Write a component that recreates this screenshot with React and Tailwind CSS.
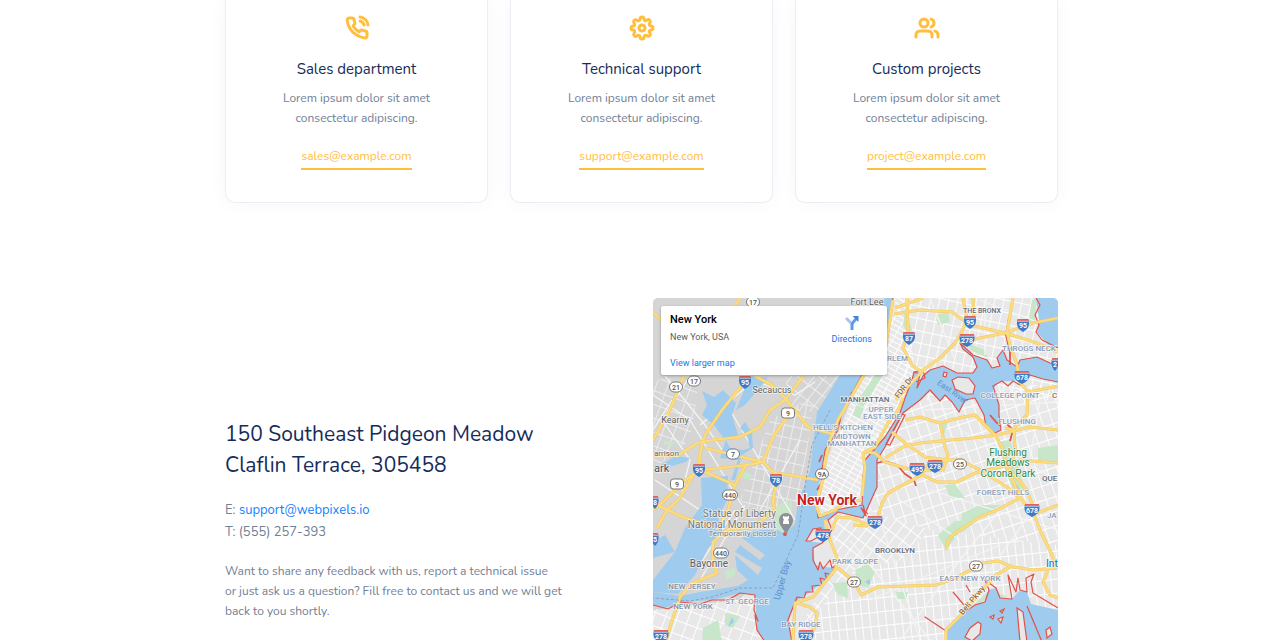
import { FiPhoneCall, FiSettings, FiUsers } from "react-icons/fi";

const departments = [
  { title: "Sales department", email: "sales@example.com", Icon: FiPhoneCall },
  { title: "Technical support", email: "support@example.com", Icon: FiSettings },
  { title: "Custom projects", email: "project@example.com", Icon: FiUsers },
];

const highways = [
  "M653 440L670 410L676 395L690 360L700 330",
  "M653 455L677 456L697 443L713 440L740 437L760 427L770 410L785 400L802 378L812 360",
  "M653 510L663 502L683 482L699 470L700 453L705 435L722 410L738 390L750 375",
  "M705 448L763 462L774 473L776 482L773 503L775 510L753 527L727 530L713 542L713 563L717 573L693 583L680 597L670 627L666 642",
  "M703 470L747 465L763 462L773 437L787 417",
  "M705 472L735 485L747 463M735 485L728 510L717 530",
  "M657 505L683 517L713 527M693 475L680 498L667 510L657 528",
  "M775 473L790 475L818 480M653 312L661 320",
  "M755 376L770 384L785 398L808 427L832 434",
  "M893 300L886 345L862 378L838 420L830 440L825 462L823 480L816 505L820 516L835 510L845 502L862 500",
  "M903 398L898 410L888 423L875 447L863 453L865 467L862 496",
  "M865 452L875 453L885 462L912 470L948 460L960 460L980 470L1007 487L1020 498",
  "M892 432L905 443L925 457L948 460M885 458L905 446L920 443L973 438L997 435L1030 427L1058 430",
  "M832 530L837 517L852 518L868 525L878 517L882 503L888 493L918 477L925 470L943 470L948 455L945 447L940 423",
  "M912 470L937 482L957 482L975 473L1000 467L1020 460L1058 463",
  "M905 420L920 417L940 423L963 417L975 415L987 427L995 435L1002 447L1008 470L1020 497L1035 517L1040 530L1051 553L1057 568",
  "M1005 428L1014 430L1015 450L1010 470L1027 490L1035 512M1037 513L1058 505",
  "M946 550L948 540L956 532L960 530L980 517L997 510L1020 498",
  "M894 314L920 310L952 312L970 325L1005 333L1037 343L1058 352",
  "M963 298L967 320L960 335L955 343L940 358L923 370L905 390L896 400",
  "M960 342L1005 333L1033 323L1058 318M973 298L974 328",
  "M1013 298L1007 332L1010 345L1017 365L1020 382L1028 392L1027 415L1014 428M1028 392L1058 386",
  "M907 298L908 332L903 348L912 365L923 373M895 308L923 298",
  "M825 520L830 540L838 560L835 570L813 597L795 603L793 642M797 603L810 607L817 613L815 627L806 640",
  "M838 568L855 582L861 595L878 587L936 585L956 578L983 563L998 561L1013 567L1033 570L1058 568",
  "M946 642L946 630L963 613L976 597L996 575L1010 567M1048 570L1043 582L1050 595L1058 598",
  "M853 525L868 526M740 298L735 306",
];

const interstates = [
  ["95", 745, 382], ["95", 970, 322], ["95", 1023, 325], ["87", 909, 338], ["278", 967, 340],
  ["678", 1022, 377], ["95", 699, 470], ["78", 776, 480], ["495", 917, 469], ["278", 935, 466],
  ["278", 875, 522], ["478", 823, 535], ["678", 1032, 510], ["278", 661, 636], ["278", 806, 636],
  ["8", 655, 502], ["5", 655, 539], ["2", 1055, 364],
];

const routes = [
  ["17", 753, 302], ["21", 676, 387], ["17", 694, 381], ["9", 788, 413], ["7", 733, 454],
  ["440", 730, 495], ["9", 677, 484], ["9A", 822, 474], ["25", 960, 464], ["440", 721, 553],
  ["27", 854, 582], ["27", 976, 566],
];

const areaLabels = [
  ["THE BRONX", 982, 313, 7, "#5f6b7c"], ["THROGS NECK", 1029, 351, 8, "#8c9ab5"],
  ["HARLEM", 892, 361, 8, "#8c9ab5"], ["MANHATTAN", 865, 402, 8, "#5f6b7c"],
  ["UPPER", 881, 412, 8, "#8c9ab5"], ["EAST SIDE", 882, 419, 8, "#8c9ab5"],
  ["COLLEGE POINT", 1010, 398, 8, "#8c9ab5"], ["FLUSHING", 1017, 424, 8, "#8c9ab5"],
  ["HELL'S KITCHEN", 843, 430, 8, "#8c9ab5"], ["MIDTOWN", 852, 439, 8, "#8c9ab5"],
  ["MANHATTAN", 852, 446, 8, "#8c9ab5"], ["FOREST HILLS", 1003, 495, 8, "#8c9ab5"],
  ["BROOKLYN", 895, 553, 8, "#5f6b7c"], ["PARK SLOPE", 855, 564, 8, "#8c9ab5"],
  ["EAST NEW YORK", 970, 581, 8, "#8c9ab5"], ["NEW JERSEY", 692, 589, 8, "#87909e"],
  ["NEW YORK", 693, 609, 8, "#87909e"], ["ST. GEORGE", 747, 604, 8, "#8c9ab5"],
  ["BAY RIDGE", 801, 627, 8, "#8c9ab5"],
];

const placeLabels = [
  ["Fort Lee", 867, 305, 9, "#5c5c5c"], ["Secaucus", 772, 393, 9, "#5c5c5c"],
  ["Kearny", 675, 423, 9, "#5c5c5c"], ["Bayonne", 709, 567, 10, "#5c5c5c"],
  ["Flushing", 1008, 456, 10, "#2f8a4c"], ["Meadows", 1008, 466, 10, "#2f8a4c"],
  ["Corona Park", 1008, 477, 10, "#2f8a4c"],
];

function StreetPattern({ id, width, height, angle }) {
  return (
    <pattern id={id} width={width} height={height} patternUnits="userSpaceOnUse" patternTransform={`rotate(${angle})`}>
      <path d={`M0 0H${width}M0 0V${height}`} stroke="#fff" strokeWidth="1.8" fill="none" />
    </pattern>
  );
}

function Interstate({ label, x, y }) {
  const w = label.length > 2 ? 7 : label.length > 1 ? 5.5 : 3;
  return (
    <g transform={`translate(${x} ${y})`}>
      <path d={`M${-w} -5.5H${w}C${w + 1.5} 0 ${w} 4 0 7C${-w} 4 ${-w - 1.5} 0 ${-w} -5.5Z`} fill="#3d7ac8" />
      <path d={`M${-w} -6H${w}V-4H${-w}Z`} fill="#e0625c" />
      <path d={`M${-w} -3.7H${w}`} stroke="#fff" strokeWidth="0.6" />
      <text y="3" fontSize="7" fontWeight="700" fill="#fff" textAnchor="middle">{label}</text>
    </g>
  );
}

function RouteMarker({ label, x, y }) {
  const w = label.length > 2 ? 15 : 13;
  return (
    <g transform={`translate(${x} ${y})`}>
      <rect x={-w / 2} y="-5" width={w} height="10" rx={label === "9" ? 3 : 5} fill="#fff" stroke="#6b6b6b" strokeWidth="0.9" />
      <text y="3" fontSize="7" fontWeight="500" fill="#555" textAnchor="middle">{label}</text>
    </g>
  );
}

function CityMap() {
  return (
    <svg viewBox="653 298 405 444" preserveAspectRatio="xMidYMin slice" className="block h-full w-full font-[Roboto,sans-serif]" role="img" aria-label="Map of New York">
      <defs>
        <StreetPattern id="manhattan" width={9} height={5} angle={29} />
        <StreetPattern id="bronx" width={9} height={12} angle={12} />
        <StreetPattern id="queens" width={10} height={14} angle={-18} />
        <StreetPattern id="brooklyn" width={9} height={13} angle={38} />
        <StreetPattern id="flatbush" width={8} height={14} angle={-6} />
        <StreetPattern id="island" width={11} height={13} angle={20} />
      </defs>

      <rect x="653" y="298" width="405" height="444" fill="#e8e8e8" />
      <path d="M653 298H888L862 375L818 480L795 530L740 600L653 610Z" fill="#d5d5d5" />

      <path d="M905 298H1058V400H960L920 400L905 385Z" fill="url(#bronx)" />
      <path d="M893 298H905L915 372L898 412L862 507L820 518L823 475L862 375Z" fill="url(#manhattan)" />
      <path d="M870 440L925 385H1058V545L930 530L868 510Z" fill="url(#queens)" />
      <path d="M832 515L868 510L930 530L900 560L855 570L790 640L835 570Z" fill="url(#brooklyn)" />
      <path d="M855 570L900 560L930 530L1058 545V640H850L790 642Z" fill="url(#flatbush)" />
      <path d="M653 610L755 595L770 642H653Z" fill="url(#island)" />
      <g opacity="0.6">
        <path d="M653 380L700 376L690 440L653 470Z" fill="url(#island)" />
        <path d="M770 420L815 395L800 500L765 520L740 500Z" fill="url(#bronx)" />
        <path d="M785 376H842L818 412L790 410Z" fill="url(#brooklyn)" />
      </g>

      <g fill="#c8e6c9">
        <path d="M881 366L887 369L863 407L856 403Z" />
        <path d="M856 405L864 409L860 419L853 415Z" />
        <path d="M936 315L948 312L950 322L938 325Z" />
        <path d="M968 343L985 350L988 358L970 350Z" />
        <path d="M1032 300L1037 298L1035 322L1028 325Z" />
        <path d="M905 310L912 330L908 335L903 325Z" />
        <path d="M998 442L1010 440L1018 465L1025 490L1015 495L1005 470Z" />
        <path d="M1038 448L1058 445V462L1038 460Z" />
        <path d="M945 485L955 484L965 498L950 498Z" />
        <path d="M962 513L980 505L1000 505L978 520L960 534Z" />
        <path d="M938 535L955 521L975 520L960 532L946 550Z" />
        <path d="M940 425L948 422L944 435Z" />
        <path d="M855 570L868 564L875 572L868 588L858 585Z" />
        <path d="M896 592L908 592L906 599L897 599Z" />
        <path d="M832 583L847 582L848 598L838 595Z" />
        <path d="M958 612L972 606L990 590L1008 597L985 600L976 606L968 610Z" />
        <path d="M740 470L753 475L750 480L740 478Z" />
        <path d="M777 505L792 500V530L775 535Z" />
        <path d="M725 570L735 568V575L726 579Z" />
        <path d="M703 628L718 620L722 642H702Z" />
        <path d="M725 613L740 616L733 628L725 625Z" />
        <path d="M850 378L830 405L827 402L844 378Z" />
        <path d="M664 441L676 442L672 446L664 445Z" />
      </g>

      <g stroke="#f4f4f4" strokeWidth="1.3" fill="none">
        <path d="M653 395L690 420L745 510M665 376L705 425L722 450M653 430L672 400M690 376L662 420L690 460L680 500M700 425L760 376M730 410L795 520M740 376L795 395L815 382M760 510L800 440M655 480L700 510M745 505L700 580M735 510L693 575M725 520L690 560" />
        <path d="M925 410L1058 402M960 430L1058 480M930 490L1058 530M1000 510L960 560M900 500L960 540M850 540L930 640M880 520L920 640M1040 400L1030 460M870 600L1000 545M900 640L960 560M1058 330L980 300M985 300L985 355M930 298L955 360M1040 500L990 570" />
      </g>

      <g fill="#9fcbee">
        <path d="M885 298H893L888 335L862 375L842 412L838 430L825 450L822 470L816 500L818 518L826 515L835 510L862 505L863 477L865 460L885 437L900 413L905 398L912 380L914 372L920 372L917 388L923 376L930 370L943 366L957 373L973 373L977 367L973 357L963 349L960 343L973 355L987 360L992 368L1000 366L997 358L1003 350L1007 360L1017 367L1020 360L1037 357L1050 363L1058 366V382L1043 379L1030 375L1020 380L1010 381L998 382L993 390L999 405L999 415L1001 430L995 433L986 427L984 415L975 398L965 400L959 412L952 402L945 395L940 401L930 390L920 400L903 413L885 447L877 460L877 487L868 507L863 518L838 512L828 520L824 523L825 530L810 537L808 541L822 543L813 548L815 565L832 568L835 572L813 590L795 602L788 620L792 642H765L757 630L755 595L740 593L712 600L680 602L665 608L653 605V592L680 596L700 592L738 586L748 580L737 570L735 555L758 575L762 568L735 552L740 545L760 560L765 555L742 538L755 530L778 530L785 534L795 524L798 500L805 485L810 470L817 412L840 375Z" />
        <path d="M1036 298H1058V348L1048 345L1037 332L1039 320Z" />
        <path d="M701 478L728 476L727 500L718 518L723 532L708 548L695 575L678 594L653 592V580L675 552L685 528L702 505Z" />
        <path d="M653 542L665 535L675 552L653 558Z" />
        <path d="M702 391L714 397L723 390L736 403L732 415L738 435L725 440L714 425L702 415L707 405Z" />
        <path d="M946 642V631L963 613L975 605L985 602L989 590L996 588L1000 598L1012 599L1020 590L1027 592L1031 604L1058 610V642Z" />
        <path d="M1017 484L1020 492L1015 488ZM865 582L870 579L870 585ZM728 627L732 617L734 622Z" />
      </g>
      <path d="M726 440L730 448L743 450L750 448L747 435L740 428L745 422L752 433L753 448L742 455L735 480L731 480L738 460L720 458ZM653 470L675 456L690 458L686 462L665 468ZM750 376L768 378L745 405L736 410Z" fill="#9fcbee" />

      <g fill="#e8e8e8" stroke="#e0524c" strokeWidth="1.2">
        <path d="M952 380L958 377L969 378L975 386L973 394L966 394L955 389Z" />
        <path d="M944 372L947 373L946 377L943 376Z" />
        <path d="M965 637L970 628L978 622L981 624L980 634L972 641Z" />
        <path d="M990 617L994 615L993 619ZM1000 611L1004 609L1002 613ZM998 619L1003 617L1001 623ZM1046 630L1050 627L1052 634L1047 638Z" />
        <path d="M1017 608L1023 612L1027 642H1020Z" />
        <path d="M806 541L813 529L821 528L822 535L811 541Z" />
        <path d="M886 444L902 414L905 415L890 445Z" />
      </g>
      <circle cx="785" cy="534" r="2" fill="#e0524c" />

      <g fill="none" stroke="#e0524c" strokeWidth="1.2" strokeLinejoin="round">
        <path d="M893 298L888 335L862 375L842 412L838 430L825 450L822 470L821 490L816 500L818 518L826 515L835 510L862 505L863 477L865 460L885 437L900 413L905 398L912 380L914 372L920 374L917 388L923 376L930 370L943 366L957 373L973 373L977 367L973 357L963 349L960 343L973 355L987 360L992 368L1000 366L997 358L1003 350L1007 360L1017 367L1020 360L1037 357L1050 363L1058 366" />
        <path d="M1058 382L1043 379L1030 375L1020 385L1013 381L1008 386L1002 381L993 386L999 405L999 415L1001 430L995 433L986 427L984 415L975 398L965 400L959 412L952 402L945 395L940 401L930 390L920 400L903 413L885 447L877 460L877 487L868 507L863 518L838 512L828 520L832 530L825 540L822 543L813 548L813 560L818 570L820 562L823 569L830 560L832 568L835 566L832 575L825 573L827 580L820 578L822 585L812 586L813 592L806 592L804 598L797 597L795 602L788 620L792 642" />
        <path d="M765 642L757 630L755 615L758 621L754 610L755 595L740 593L728 600L712 600L700 604L680 602L668 609L653 605" />
        <path d="M1036 298L1040 305L1035 315L1039 325L1036 332L1042 340L1048 343L1058 348" />
        <path d="M946 642V631L925 617L946 631L963 613L975 605L985 602L989 590L985 580L996 588L1000 598L1012 599L1008 575L1016 592L1018 578L1020 590L1027 592L1026 578L1034 574L1031 582L1033 593L1058 608M953 592L964 605M966 585L970 592M1027 606L1042 642" />
        <path d="M877 463L885 461L897 465L905 474L914 480L916 486M1007 424L1013 430L1010 441M1009 318L1006 335L1010 352L1010 365M822 455L819 462M822 468L818 475M821 484L817 490M838 422L833 429M852 392L850 400M990 415L996 422L1001 426" strokeWidth="1.8" />
        <path d="M914 372L923 370L925 378L916 382M863 505L866 516L861 508L868 514" />
      </g>

      <g fill="none" strokeLinejoin="round">
        {highways.map((d) => <path key={d} d={d} stroke="#f1c862" strokeWidth="3.2" />)}
        {highways.map((d) => <path key={d} d={d} stroke="#fbdc80" strokeWidth="2.2" />)}
      </g>
      <path d="M830 410L812 445L806 480L798 535L773 588L740 588L712 597L690 601L653 598" fill="none" stroke="#8597a8" strokeWidth="0.8" strokeDasharray="3 2" />

      <g stroke="#fff" strokeWidth="1.5" strokeOpacity="0.7" paintOrder="stroke" textAnchor="middle">
        {areaLabels.map(([label, x, y, size, fill]) => (
          <text key={label + y} x={x} y={y} fontSize={size} fill={fill} fontWeight="500">{label}</text>
        ))}
        {placeLabels.map(([label, x, y, size, fill]) => (
          <text key={label} x={x} y={y} fontSize={size} fill={fill}>{label}</text>
        ))}
        <g fontSize="10" fill="#777" textAnchor="end">
          <text x="776" y="517">Statue of Liberty</text>
          <text x="776" y="528">National Monument</text>
          <text x="776" y="536" fontSize="8">Temporarily closed</text>
        </g>
        <g textAnchor="start">
          <text x="654" y="456" fontSize="8" fill="#5c5c5c">arrison</text>
          <text x="654" y="472" fontSize="11" fill="#4c4c4c">ark</text>
          <text x="1042" y="481" fontSize="8" fontWeight="500" fill="#5f6b7c">QUE</text>
          <text x="1047" y="518" fontSize="8" fontWeight="500" fill="#8c9ab5">JA</text>
          <text x="1046" y="567" fontSize="10" fontWeight="500" fill="#1e88d8">Int</text>
          <text x="1052" y="398" fontSize="8" fontWeight="500" fill="#9a6a35">C</text>
        </g>
        <text transform="translate(785 581) rotate(-74)" fontSize="9" fill="#5a8fcf" strokeOpacity="0">Upper Bay</text>
        <text transform="translate(951 394) rotate(35)" fontSize="8" fill="#5a8fcf" strokeOpacity="0">East River</text>
        <text transform="translate(906 389) rotate(-52)" fontSize="8" fontWeight="500" fill="#9a6a35">FDR Dr</text>
        <text transform="translate(974 602) rotate(-50)" fontSize="8" fontWeight="500" fill="#9a6a35">Belt Pkwy</text>
      </g>

      {interstates.map(([label, x, y]) => <Interstate key={label + x + y} label={label} x={x} y={y} />)}
      {routes.map(([label, x, y]) => <RouteMarker key={label + x + y} label={label} x={x} y={y} />)}

      <path d="M786 535C784 529 779 526 779 520A7 7 0 0 1 793 520C793 526 788 529 786 535Z" fill="#8b9096" />
      <path d="M783 524V522L784 519H783V516H784.5V517H785.5V516H786.5V517H787.5V516H789V519H788L789 522V524Z" fill="#fff" />
      <text x="827" y="505" fontSize="14" fontWeight="700" fill="#c5221f" stroke="#fff" strokeWidth="2" paintOrder="stroke" textAnchor="middle">New York</text>
    </svg>
  );
}

function DepartmentCard({ title, email, Icon }) {
  return (
    <article className="flex flex-col items-center rounded-b-[10px] border border-t-0 border-[#eceef6] bg-white px-8 pt-4 pb-8 text-center shadow-[0_0_20px_rgba(31,45,61,0.04)]">
      <Icon size={24} strokeWidth={3} className="overflow-visible text-[#ffbe3d]" aria-hidden="true" />
      <h2 className="mt-[18px] text-[15px] leading-[22px] text-[#152c5b]">{title}</h2>
      <p className="mt-2 text-xs leading-5 text-[#718096]">Lorem ipsum dolor sit amet<br />consectetur adipiscing.</p>
      <a href={`mailto:${email}`} className="mt-[18px] border-b-2 border-[#ffbe3d] pb-[2px] text-xs leading-5 text-[#ffbe3d]">{email}</a>
    </article>
  );
}

export default function App() {
  return (
    <main className="h-screen overflow-hidden bg-white font-['Nunito','Lato',sans-serif]">
      <div className="mx-auto max-w-[836px] pl-[3px]">
        <section className="grid grid-cols-3 gap-[22px]">
          {departments.map((item) => <DepartmentCard key={item.title} {...item} />)}
        </section>

        <section className="mt-[95px] grid grid-cols-[minmax(0,1fr)_minmax(0,405px)] items-center">
          <div className="max-w-[340px]">
            <h1 className="text-[21px] leading-[31px] text-[#152c5b]">150 Southeast Pidgeon Meadow<br />Claflin Terrace, 305458</h1>
            <p className="mt-[18px] text-[13px] leading-[22px] text-[#718096]">
              E: <a href="mailto:support@webpixels.io" className="text-[#0f7fff]">support@webpixels.io</a>
              <br />T: (555) 257-393
            </p>
            <p className="mt-[18px] text-xs leading-5 text-[#718096]">
              Want to share any feedback with us, report a technical issue<br />
              or just ask us a question? Fill free to contact us and we will get<br />
              back to you shortly.
            </p>
          </div>

          <div className="relative h-[444px] overflow-hidden rounded-[5px]">
            <CityMap />
            <div className="absolute top-2 left-2 flex w-[226px] justify-between rounded-[2px] bg-white pt-[7px] pr-[15px] pb-[5px] pl-[9px] font-[Roboto,sans-serif] shadow-[0_1px_3px_rgba(0,0,0,0.3)]">
              <div className="flex flex-col">
                <h2 className="text-[11px] leading-[14px] font-medium text-black">New York</h2>
                <p className="mt-[3px] text-[9px] leading-[14px] text-[#5b5b5b]">New York, USA</p>
                <a href="#larger-map" className="mt-3 text-[9px] leading-[14px] text-[#1a73e8]">View larger map</a>
              </div>
              <a href="#directions" className="flex flex-col items-center pt-[2px] text-[9px] leading-[14px] text-[#1a73e8]">
                <svg width="14" height="16" viewBox="0 0 14 16" aria-hidden="true">
                  <path d="M1 3L7 9" stroke="#a4c6f0" strokeWidth="3" fill="none" />
                  <path d="M7 15V10Q7 8 11 4" stroke="#5b9ae8" strokeWidth="3" fill="none" />
                  <path d="M7.5 1H13.5V7Z" fill="#4285d8" />
                </svg>
                <span className="mt-[1px]">Directions</span>
              </a>
            </div>
          </div>
        </section>
      </div>
    </main>
  );
}
